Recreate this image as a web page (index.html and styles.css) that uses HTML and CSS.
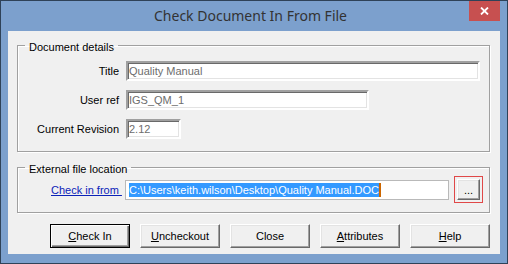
FILE: index.html
```html
<!DOCTYPE html>
<html lang="en">
  <head>
    <meta charset="UTF-8" />
    <title>Check Document In From File</title>
    <link rel="stylesheet" href="styles.css">
  </head>
  <body>
    <div class="window">
      <div class="titlebar">
        <span class="title">Check Document In From File</span>
        <button class="close" title="Close">
          <svg width="9" height="8" viewBox="0 0 9 8">
            <path d="M1 0.5 L8 7.5 M8 0.5 L1 7.5" stroke="#fff" stroke-width="1.8" fill="none" />
          </svg>
        </button>
      </div>

      <div class="client">
        <fieldset class="group">
          <legend>Document details</legend>
          <div class="form">
            <label for="title">Title</label>
            <input class="field field-title" id="title" value="Quality Manual" readonly />
            <label for="userref">User ref</label>
            <input class="field field-ref" id="userref" value="IGS_QM_1" readonly />
            <label for="revision">Current Revision</label>
            <input class="field field-rev" id="revision" value="2.12" readonly />
          </div>
        </fieldset>

        <fieldset class="group">
          <legend>External file location</legend>
          <div class="browse-row">
            <a class="link" href="#">Check in from </a>
            <div class="path"><span class="sel">C:\Users\keith.wilson\Desktop\Quality Manual.DOC</span></div>
            <button class="btn browse">...</button>
          </div>
        </fieldset>

        <div class="actions">
          <button class="btn default"><u>C</u>heck In</button>
          <button class="btn"><u>U</u>ncheckout</button>
          <button class="btn">Close</button>
          <button class="btn"><u>A</u>ttributes</button>
          <button class="btn"><u>H</u>elp</button>
        </div>
      </div>
    </div>
  </body>
</html>
```

FILE: styles.css
```css
/* dialog */
body {
  margin: 0;
  font-family: "Liberation Sans", Arial, sans-serif;
  font-size: 11px;
}

.window {
  width: 508px;
  height: 264px;
  box-sizing: border-box;
  border: 1px solid #2f4258;
  background: #7ca0cd;
  padding: 0 7px 9px 7px;
  display: flex;
  flex-direction: column;
}

.titlebar {
  height: 30px;
  margin: 0 -7px;
  padding-right: 7px;
  display: grid;
  grid-template-columns: 1fr auto 1fr;
}

.title {
  grid-column: 2;
  align-self: center;
  font-family: "Noto Sans", "Open Sans", sans-serif;
  font-size: 14px;
  color: #333;
  line-height: 30px;
}

.close {
  grid-column: 3;
  justify-self: end;
  align-self: start;
  width: 31px;
  height: 20px;
  border: none;
  padding: 0;
  background: #c75050;
  display: flex;
  align-items: center;
  justify-content: center;
}

.client {
  flex: 1;
  background: #f0f0f0;
  padding-top: 6px;
}

.group {
  margin: 0 10px 0 9px;
  padding: 7px 0 12px 0;
  border: 1px solid #a0a0a0;
  box-shadow: inset 1px 1px #fff, 1px 1px #fff;
  min-width: 0;
}

.group + .group {
  margin-top: 7px;
  padding-top: 3px;
}

.group legend {
  margin-left: 7px;
  padding: 4px 4px 0;
  line-height: 13px;
  color: #000;
}

.form {
  display: grid;
  grid-template-columns: 95px auto;
  column-gap: 7px;
  row-gap: 9px;
  padding-left: 6px;
  align-items: center;
  justify-items: start;
}

.form label {
  justify-self: end;
  white-space: nowrap;
  color: #000;
}

.field {
  box-sizing: border-box;
  height: 20px;
  margin: 0;
  padding: 0 0 0 1px;
  border: 2px solid;
  border-color: #a0a0a0 #fff #fff #a0a0a0;
  box-shadow: inset 1px 1px #696969, inset -1px -1px #e3e3e3;
  background: #fff;
  font-family: "Liberation Sans", Arial, sans-serif;
  font-size: 11px;
  color: #6d6d6d;
  outline: none;
}

.field-title {
  width: 354px;
}

.field-ref {
  width: 243px;
}

.field-rev {
  width: 55px;
}

.browse-row {
  display: flex;
  align-items: center;
  padding-left: 33px;
}

.link {
  color: #0b22b8;
  text-decoration: underline;
  width: 74px;
  white-space: pre;
}

.path {
  box-sizing: border-box;
  width: 324px;
  height: 20px;
  border: 1px solid #b9b9b9;
  background: #fff;
  padding: 2px 0 0 3px;
  margin-right: 8px;
  white-space: nowrap;
  overflow: hidden;
}

.sel {
  background: #3399ff;
  color: #fff;
  line-height: 14px;
  display: inline-block;
  border-right: 2px solid #cc6600;
}

.btn {
  box-sizing: border-box;
  width: 80px;
  height: 24px;
  padding: 0;
  background: #f0f0f0;
  border: 1px solid;
  border-color: #fff #696969 #696969 #fff;
  box-shadow: inset -1px -1px #a0a0a0, inset 1px 1px #e3e3e3;
  font-family: "Liberation Sans", Arial, sans-serif;
  font-size: 11px;
  color: #000;
}

.btn.default {
  border: 1px solid #000;
  box-shadow: inset 1px 1px #fff, inset -1px -1px #696969, inset -2px -2px #a0a0a0;
}

.browse {
  width: 23px;
  height: 21px;
  outline: 1px solid #e04848;
  outline-offset: 2px;
  line-height: 14px;
}

.actions {
  display: flex;
  gap: 10px;
  padding-left: 42px;
  margin-top: 11px;
}
```
